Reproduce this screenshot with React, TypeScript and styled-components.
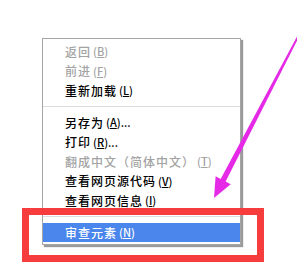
import React from 'react';
import styled, { createGlobalStyle } from 'styled-components';

const GlobalStyle = createGlobalStyle`
  html, body {
    margin: 0;
    padding: 0;
    background: #ffffff;
  }
  body {
    font-family: "Noto Sans CJK SC", "Noto Sans", sans-serif;
  }
`;

const Page = styled.div`
  position: relative;
  width: 297px;
  height: 266px;
  overflow: hidden;
  background: #ffffff;
`;

const Menu = styled.ul`
  list-style: none;
  box-sizing: border-box;
  width: 199px;
  margin: 0;
  margin-left: 42px;
  position: relative;
  top: 38px;
  padding: 3px 0 2px;
  background: #ffffff;
  border: 1px solid #a6a6a6;
  box-shadow: 2px 2px 1px #9a9a9a;
`;

const Item = styled.li<{ $disabled?: boolean; $active?: boolean }>`
  display: flex;
  align-items: center;
  height: 19.6px;
  padding-left: 22px;
  font-size: 12px;
  font-weight: 500;
  letter-spacing: 1px;
  line-height: 1;
  white-space: nowrap;
  color: ${(p) => (p.$active ? '#ffffff' : p.$disabled ? '#a3a3a3' : '#000000')};
  background: ${(p) => (p.$active ? '#4a86ec' : 'transparent')};
`;

const Key = styled.span`
  font-size: 11px;
  margin-left: 2px;
  letter-spacing: 0;
  u {
    text-underline-offset: 1px;
  }
`;

const Separator = styled.li`
  height: 12px;
  display: flex;
  align-items: center;
  &::after {
    content: '';
    display: block;
    width: 100%;
    height: 1px;
    background: #dcdcdc;
  }
`;

const Highlight = styled.div`
  position: absolute;
  left: 22px;
  top: 208px;
  width: 242px;
  height: 54px;
  box-sizing: border-box;
  border: 7px solid #f63c3c;
`;

const Overlay = styled.svg`
  position: absolute;
  left: 0;
  top: 0;
`;

type Entry = { label: string; key?: string; tail?: string; disabled?: boolean; active?: boolean } | 'sep';

const entries: Entry[] = [
  { label: '返回', key: 'B', disabled: true },
  { label: '前进', key: 'F', disabled: true },
  { label: '重新加载', key: 'L' },
  'sep',
  { label: '另存为', key: 'A', tail: '...' },
  { label: '打印', key: 'R', tail: '...' },
  { label: '翻成中文（简体中文）', key: 'T', disabled: true },
  { label: '查看网页源代码', key: 'V' },
  { label: '查看网页信息', key: 'I' },
  'sep',
  { label: '审查元素', key: 'N', active: true },
];

function Arrow() {
  // shaft from the top right corner down to the arrow head
  const tip = [214, 198];
  const u = [-0.458, 0.888];
  const p = [0.888, 0.458];
  const base = [tip[0] - 20 * u[0], tip[1] - 20 * u[1]];
  const top = [302, 29];
  const pt = (c: number[], s: number) => `${c[0] + s * p[0]},${c[1] + s * p[1]}`;
  const points = [
    pt(top, -0.9),
    pt(top, 0.9),
    pt(base, 2.8),
    pt(base, 8.5),
    `${tip[0]},${tip[1]}`,
    pt(base, -8.5),
    pt(base, -2.8),
  ].join(' ');
  return (
    <Overlay width="297" height="266" viewBox="0 0 297 266">
      <polygon points={points} fill="#e629e6" />
    </Overlay>
  );
}

export default function App() {
  return (
    <Page>
      <GlobalStyle />
      <Menu>
        {entries.map((e, i) =>
          e === 'sep' ? (
            <Separator key={i} />
          ) : (
            <Item key={i} $disabled={e.disabled} $active={e.active}>
              {e.label}
              <Key>
                (<u>{e.key}</u>){e.tail}
              </Key>
            </Item>
          )
        )}
      </Menu>
      <Highlight />
      <Arrow />
    </Page>
  );
}
